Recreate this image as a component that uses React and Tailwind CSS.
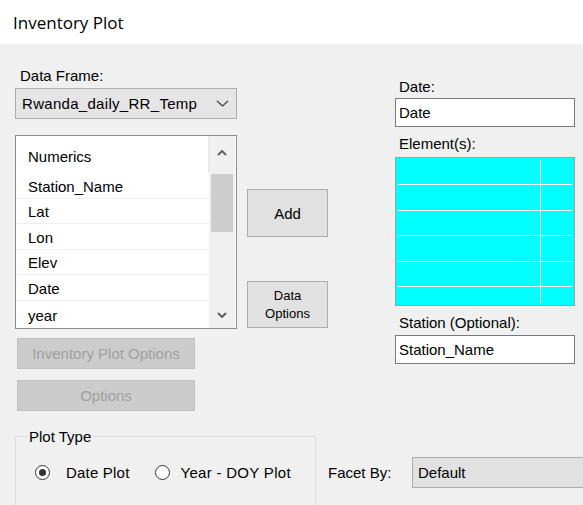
import React from "react";

const F = "font-['Liberation_Sans',Arial,sans-serif]";

function Chev({ up, w = 10, h = 6, color = "#606060", sw = 2 }) {
  return (
    <svg width={w} height={h} viewBox={`0 0 ${w} ${h}`}>
      <path
        d={up ? `M1 ${h - 1} L${w / 2} 1 L${w - 1} ${h - 1}` : `M1 1 L${w / 2} ${h - 1} L${w - 1} 1`}
        fill="none"
        stroke={color}
        strokeWidth={sw}
      />
    </svg>
  );
}

function Radio({ checked }) {
  return (
    <span className="shrink-0 w-[15px] h-[15px] rounded-full border border-[#333] bg-white flex items-center justify-center">
      {checked && <span className="w-[7px] h-[7px] rounded-full bg-[#333]" />}
    </span>
  );
}

export default function App() {
  const items = ["Station_Name", "Lat", "Lon", "Elev", "Date", "year"];
  return (
    <div className={`w-[583px] h-[505px] overflow-hidden bg-[#f0f0f0] text-black ${F} text-[15px] leading-[17px]`}>
      <div className="h-[44px] bg-white pl-[13px] pt-[11px] font-['Open_Sans',sans-serif] text-[17px] leading-[23px]">
        Inventory Plot
      </div>

      <div className="flex">
        {/* Left column */}
        <div className="ml-[15px] w-[222px] shrink-0 flex flex-col">
          <div className="mt-[23px] pl-[5px]">Data Frame:</div>
          <div className="mt-[4px] h-[31px] border border-[#adadad] bg-[#e5e5e5] flex items-center">
            <div className="ml-[6px] w-[186px] whitespace-nowrap tracking-[0.3px]">Rwanda_daily_RR_Temp</div>
            <div className="ml-[8px]">
              <Chev w={13} h={7} color="#404040" sw={1.2} />
            </div>
          </div>
          <div className="mt-[16px] h-[194px] border border-[#8c8c8c] bg-white flex">
            <div className="w-[193px] flex flex-col">
              <div className="h-[37px] pt-[12px] pl-[12px] border-r border-[#e6e6e6]">Numerics</div>
              {items.map((it, i) => (
                <div
                  key={it}
                  className={`h-[25.6px] flex items-end pb-[3px] pl-[11px] ml-[1px] ${i < items.length - 1 ? "border-b border-[#efefef]" : ""}`}
                >
                  {it}
                </div>
              ))}
            </div>
            <div className="w-[26px] bg-[#f0f0f0] flex flex-col">
              <div className="h-[34px] flex items-center justify-center">
                <Chev up />
              </div>
              <div className="flex-1">
                <div className="mt-[4px] mx-[2px] h-[58px] bg-[#cdcdcd]" />
              </div>
              <div className="h-[26px] flex items-center justify-center">
                <Chev />
              </div>
            </div>
          </div>
          <div className="mt-[9px] ml-[2px] w-[178px] h-[31px] border border-[#bfbfbf] bg-[#cccccc] text-[#a0a0a0] flex items-center justify-center">
            Inventory Plot Options
          </div>
          <div className="mt-[11px] ml-[2px] w-[178px] h-[31px] border border-[#bfbfbf] bg-[#cccccc] text-[#a0a0a0] flex items-center justify-center">
            Options
          </div>
        </div>

        {/* Middle column */}
        <div className="ml-[10px] w-[81px] shrink-0 flex flex-col">
          <div className="mt-[145px] h-[48px] border border-[#adadad] bg-[#e1e1e1] flex items-center justify-center">
            Add
          </div>
          <div className="mt-[44px] h-[47px] border border-[#adadad] bg-[#e1e1e1] flex flex-col items-center justify-center text-[13px] leading-[18px]">
            <span>Data</span>
            <span>Options</span>
          </div>
        </div>

        {/* Right column */}
        <div className="ml-[67px] w-[180px] shrink-0 flex flex-col">
          <div className="mt-[34px] pl-[4px]">Date:</div>
          <div className="mt-[3px] h-[29px] border border-[#7a7a7a] bg-white pl-[3px] flex items-center">Date</div>
          <div className="mt-[8px] pl-[4px]">Element(s):</div>
          <div className="mt-[5px] h-[149px] border border-[#a0a0a0] bg-[#00ffff] p-[2px] flex flex-col">
            {[25, 25.5, 25.5, 25.5, 25.5].map((h, i) => (
              <div key={i} style={{ height: h }} className="flex border-b border-white">
                <div className="w-[143px] border-r border-white" />
              </div>
            ))}
            <div className="flex-1 flex">
              <div className="w-[143px] border-r border-white" />
            </div>
          </div>
          <div className="mt-[8px] pl-[4px]">Station (Optional):</div>
          <div className="mt-[4px] h-[29px] border border-[#7a7a7a] bg-white pl-[3px] flex items-center">Station_Name</div>
        </div>
      </div>

      {/* Bottom row */}
      <div className="flex items-start">
        <fieldset className="shrink-0 ml-[15px] mt-[17px] w-[301px] h-[90px] border border-[#dcdcdc] px-[12px]">
          <legend className="px-[1px]">Plot Type</legend>
          <div className="mt-[19px] pl-[7px] flex items-center h-[17px]">
            <Radio checked />
            <span className="ml-[16px] tracking-[0.2px]">Date Plot</span>
            <span className="ml-[25px]">
              <Radio />
            </span>
            <span className="ml-[11px] tracking-[0.3px]">Year - DOY Plot</span>
          </div>
        </fieldset>
        <div className="shrink-0 ml-[12px] mt-[46px] flex items-center">
          <div className="w-[84px]">Facet By:</div>
          <div className="w-[190px] h-[31px] border border-[#adadad] bg-[#e1e1e1] pl-[5px] flex items-center">Default</div>
        </div>
      </div>
    </div>
  );
}
